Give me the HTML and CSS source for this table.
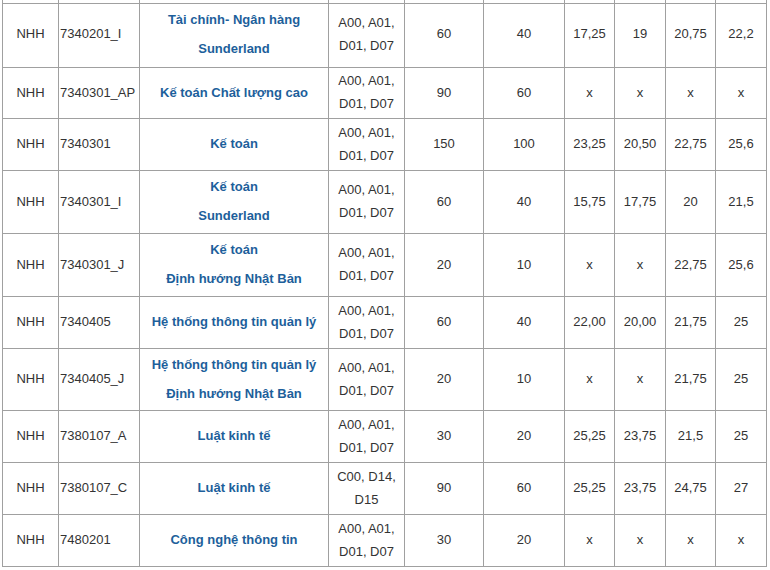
FILE: index.html
```html
<!DOCTYPE html>
<html lang="vi">
<head>
<meta charset="utf-8">
<link rel="stylesheet" href="styles.css">
</head>
<body>
<table class="grid">
<colgroup>
<col class="c1"><col class="c2"><col class="c3"><col class="c4"><col class="c5"><col class="c6"><col class="c7"><col class="c8"><col class="c9"><col class="c10">
</colgroup>
<tbody>
<tr class="stub"><td></td><td></td><td></td><td></td><td></td><td></td><td></td><td></td><td></td><td></td></tr>
<tr class="r64"><td class="sch">NHH</td><td class="code">7340201_I</td><td class="name"><p>Tài chính- Ngân hàng</p><p>Sunderland</p></td><td class="grp">A00, A01,<br>D01, D07</td><td>60</td><td>40</td><td>17,25</td><td>19</td><td>20,75</td><td>22,2</td></tr>
<tr class="r51"><td class="sch">NHH</td><td class="code">7340301_AP</td><td class="name"><p>Kế toán Chất lượng cao</p></td><td class="grp">A00, A01,<br>D01, D07</td><td>90</td><td>60</td><td>x</td><td>x</td><td>x</td><td>x</td></tr>
<tr class="r52"><td class="sch">NHH</td><td class="code">7340301</td><td class="name"><p>Kế toán</p></td><td class="grp">A00, A01,<br>D01, D07</td><td>150</td><td>100</td><td>23,25</td><td>20,50</td><td>22,75</td><td>25,6</td></tr>
<tr class="r63"><td class="sch">NHH</td><td class="code">7340301_I</td><td class="name"><p>Kế toán</p><p>Sunderland</p></td><td class="grp">A00, A01,<br>D01, D07</td><td>60</td><td>40</td><td>15,75</td><td>17,75</td><td>20</td><td>21,5</td></tr>
<tr class="r63"><td class="sch">NHH</td><td class="code">7340301_J</td><td class="name"><p>Kế toán</p><p>Định hướng Nhật Bản</p></td><td class="grp">A00, A01,<br>D01, D07</td><td>20</td><td>10</td><td>x</td><td>x</td><td>22,75</td><td>25,6</td></tr>
<tr class="r52"><td class="sch">NHH</td><td class="code">7340405</td><td class="name"><p>Hệ thống thông tin quản lý</p></td><td class="grp">A00, A01,<br>D01, D07</td><td>60</td><td>40</td><td>22,00</td><td>20,00</td><td>21,75</td><td>25</td></tr>
<tr class="r62"><td class="sch">NHH</td><td class="code">7340405_J</td><td class="name"><p>Hệ thống thông tin quản lý</p><p>Định hướng Nhật Bản</p></td><td class="grp">A00, A01,<br>D01, D07</td><td>20</td><td>10</td><td>x</td><td>x</td><td>21,75</td><td>25</td></tr>
<tr class="r52"><td class="sch">NHH</td><td class="code">7380107_A</td><td class="name"><p>Luật kinh tế</p></td><td class="grp">A00, A01,<br>D01, D07</td><td>30</td><td>20</td><td>25,25</td><td>23,75</td><td>21,5</td><td>25</td></tr>
<tr class="r52"><td class="sch">NHH</td><td class="code">7380107_C</td><td class="name"><p>Luật kinh tế</p></td><td class="grp">C00, D14,<br>D15</td><td>90</td><td>60</td><td>25,25</td><td>23,75</td><td>24,75</td><td>27</td></tr>
<tr class="r52"><td class="sch">NHH</td><td class="code">7480201</td><td class="name"><p>Công nghệ thông tin</p></td><td class="grp">A00, A01,<br>D01, D07</td><td>30</td><td>20</td><td>x</td><td>x</td><td>x</td><td>x</td></tr>
</tbody>
</table>
</body>
</html>
```

FILE: styles.css
```css
html, body {
  margin: 0;
  padding: 0;
  background: #ffffff;
}

body {
  font-family: "Liberation Sans", Arial, sans-serif;
  font-size: 13px;
  color: #333333;
}

.grid {
  border-collapse: collapse;
  table-layout: fixed;
  width: 764px;
  margin-left: 2px;
}

.c1 { width: 56px; }
.c2 { width: 81px; }
.c3 { width: 189px; }
.c4 { width: 76px; }
.c5 { width: 79px; }
.c6 { width: 81px; }
.c7 { width: 50px; }
.c8 { width: 51px; }
.c9 { width: 50px; }
.c10 { width: 51px; }

.grid td {
  border: 1px solid #a0a0a0;
  padding: 0 2px 2px;
  text-align: center;
  vertical-align: middle;
  line-height: 23px;
  overflow: hidden;
  white-space: nowrap;
}

.grid .stub td {
  border-top: none;
  height: 3px;
  padding: 0;
  line-height: 0;
}

.r64 { height: 64px; }
.r63 { height: 63px; }
.r62 { height: 62px; }
.r52 { height: 52px; }
.r51 { height: 51px; }

.grid .r64 td {
  padding-bottom: 4px;
}

.grid td.code {
  text-align: left;
  padding-left: 1px;
}

.grid td.name {
  color: #1d5f9b;
  font-weight: bold;
}

.name p {
  margin: 0;
  line-height: 29px;
}
```
